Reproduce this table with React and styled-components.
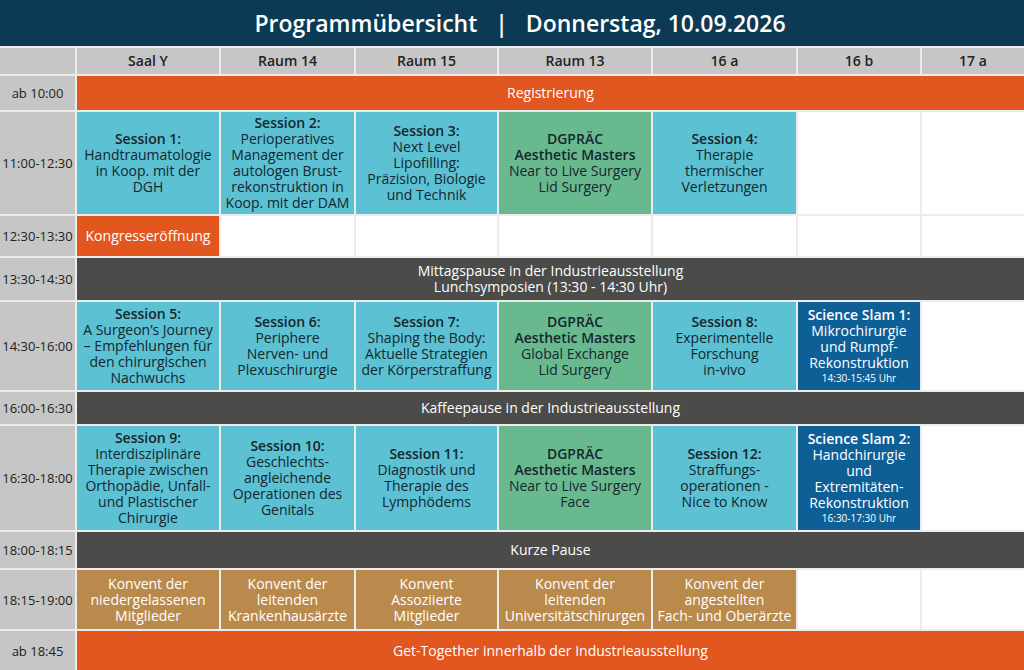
import React from "react";
import styled, { createGlobalStyle } from "styled-components";

const Global = createGlobalStyle`
  html, body { margin: 0; padding: 0; background: #fff; }
  body { font-family: "Open Sans", "Liberation Sans", sans-serif; overflow: hidden; }
`;

const tones = {
  orange: { bg: "#e2561f", fg: "#fff" },
  cyan: { bg: "#5bc1d3", fg: "#15262f" },
  green: { bg: "#69b98f", fg: "#15262f" },
  dark: { bg: "#4b4b49", fg: "#fff" },
  blue: { bg: "#0f5f97", fg: "#fff" },
  tan: { bg: "#ba8a4c", fg: "#fff" },
  empty: { bg: "#fff", fg: "#222" },
  head: { bg: "#c6c6c6", fg: "#222" },
};

const Page = styled.div`
  width: 1024px;
  height: 670px;
  display: flex;
  flex-direction: column;
  gap: 2px;
  background: #ececec;
`;

const TitleBar = styled.header`
  height: 46px;
  background: #0c3a55;
  color: #fff;
  display: flex;
  align-items: center;
  justify-content: center;
  padding-left: 16px;
  font-size: 23px;
  font-weight: 600;
  white-space: pre;
`;

const Grid = styled.div`
  display: grid;
  grid-template-columns: 75px 142px 133px 141px 152px 143px 122px 1fr;
  grid-template-rows: 26px 34px 102px 40px 42px 88px 32px 104px 36px 59px 1fr;
  gap: 2px;
  flex: 1;
`;

const Cell = styled.div`
  grid-column: span ${(p) => p.$span || 1};
  background: ${(p) => tones[p.$tone].bg};
  color: ${(p) => tones[p.$tone].fg};
  display: flex;
  flex-direction: column;
  align-items: center;
  justify-content: center;
  text-align: center;
  font-size: 14px;
  line-height: 16px;
  padding: 0 2px;
  overflow: hidden;
`;

const HeadCell = styled(Cell)`
  font-weight: 600;
  font-size: 14px;
`;

const TimeCell = styled(Cell)`
  font-size: 13px;
  padding: 0;
`;

const Strong = styled.span`
  font-weight: 600;
`;

const Small = styled.span`
  font-size: 10px;
  line-height: 15px;
`;

const rooms = ["Saal Y", "Raum 14", "Raum 15", "Raum 13", "16 a", "16 b", "17 a"];

function Block({ tone, title, lines = [], note, span }) {
  return (
    <Cell $tone={tone} $span={span}>
      {title && title.map((t) => <Strong key={t}>{t}</Strong>)}
      {lines.map((l) => <span key={l}>{l}</span>)}
      {note && <Small>{note}</Small>}
    </Cell>
  );
}

const Empty = ({ n }) =>
  Array.from({ length: n }).map((_, i) => <Cell key={i} $tone="empty" />);

export default function App() {
  return (
    <Page>
      <Global />
      <TitleBar>{"Programmübersicht   |   Donnerstag, 10.09.2026"}</TitleBar>
      <Grid>
        <HeadCell $tone="head" />
        {rooms.map((r) => (
          <HeadCell key={r} $tone="head">{r}</HeadCell>
        ))}

        <TimeCell $tone="head">ab 10:00</TimeCell>
        <Block tone="orange" span={7} lines={["Registrierung"]} />

        <TimeCell $tone="head">11:00-12:30</TimeCell>
        <Block tone="cyan" title={["Session 1:"]} lines={["Handtraumatologie", "in Koop. mit der", "DGH"]} />
        <Block tone="cyan" title={["Session 2:"]} lines={["Perioperatives", "Management der", "autologen Brust-", "rekonstruktion in", "Koop. mit der DAM"]} />
        <Block tone="cyan" title={["Session 3:"]} lines={["Next Level", "Lipofilling:", "Präzision, Biologie", "und Technik"]} />
        <Block tone="green" title={["DGPRÄC", "Aesthetic Masters"]} lines={["Near to Live Surgery", "Lid Surgery"]} />
        <Block tone="cyan" title={["Session 4:"]} lines={["Therapie", "thermischer", "Verletzungen"]} />
        <Empty n={2} />

        <TimeCell $tone="head">12:30-13:30</TimeCell>
        <Block tone="orange" lines={["Kongresseröffnung"]} />
        <Empty n={6} />

        <TimeCell $tone="head">13:30-14:30</TimeCell>
        <Block tone="dark" span={7} lines={["Mittagspause in der Industrieausstellung", "Lunchsymposien (13:30 - 14:30 Uhr)"]} />

        <TimeCell $tone="head">14:30-16:00</TimeCell>
        <Block tone="cyan" title={["Session 5:"]} lines={["A Surgeon’s Journey", "– Empfehlungen für", "den chirurgischen", "Nachwuchs"]} />
        <Block tone="cyan" title={["Session 6:"]} lines={["Periphere", "Nerven- und", "Plexuschirurgie"]} />
        <Block tone="cyan" title={["Session 7:"]} lines={["Shaping the Body:", "Aktuelle Strategien", "der Körperstraffung"]} />
        <Block tone="green" title={["DGPRÄC", "Aesthetic Masters"]} lines={["Global Exchange", "Lid Surgery"]} />
        <Block tone="cyan" title={["Session 8:"]} lines={["Experimentelle", "Forschung", "in-vivo"]} />
        <Block tone="blue" title={["Science Slam 1:"]} lines={["Mikrochirurgie", "und Rumpf-", "Rekonstruktion"]} note="14:30-15:45 Uhr" />
        <Empty n={1} />

        <TimeCell $tone="head">16:00-16:30</TimeCell>
        <Block tone="dark" span={7} lines={["Kaffeepause in der Industrieausstellung"]} />

        <TimeCell $tone="head">16:30-18:00</TimeCell>
        <Block tone="cyan" title={["Session 9:"]} lines={["Interdisziplinäre", "Therapie zwischen", "Orthopädie, Unfall-", "und Plastischer", "Chirurgie"]} />
        <Block tone="cyan" title={["Session 10:"]} lines={["Geschlechts-", "angleichende", "Operationen des", "Genitals"]} />
        <Block tone="cyan" title={["Session 11:"]} lines={["Diagnostik und", "Therapie des", "Lymphödems"]} />
        <Block tone="green" title={["DGPRÄC", "Aesthetic Masters"]} lines={["Near to Live Surgery", "Face"]} />
        <Block tone="cyan" title={["Session 12:"]} lines={["Straffungs-", "operationen -", "Nice to Know"]} />
        <Block tone="blue" title={["Science Slam 2:"]} lines={["Handchirurgie", "und", "Extremitäten-", "Rekonstruktion"]} note="16:30-17:30 Uhr" />
        <Empty n={1} />

        <TimeCell $tone="head">18:00-18:15</TimeCell>
        <Block tone="dark" span={7} lines={["Kurze Pause"]} />

        <TimeCell $tone="head">18:15-19:00</TimeCell>
        <Block tone="tan" lines={["Konvent der", "niedergelassenen", "Mitglieder"]} />
        <Block tone="tan" lines={["Konvent der", "leitenden", "Krankenhausärzte"]} />
        <Block tone="tan" lines={["Konvent", "Assoziierte", "Mitglieder"]} />
        <Block tone="tan" lines={["Konvent der", "leitenden", "Universitätschirurgen"]} />
        <Block tone="tan" lines={["Konvent der", "angestellten", "Fach- und Oberärzte"]} />
        <Empty n={2} />

        <TimeCell $tone="head">ab 18:45</TimeCell>
        <Block tone="orange" span={7} lines={["Get-Together innerhalb der Industrieausstellung"]} />
      </Grid>
    </Page>
  );
}
